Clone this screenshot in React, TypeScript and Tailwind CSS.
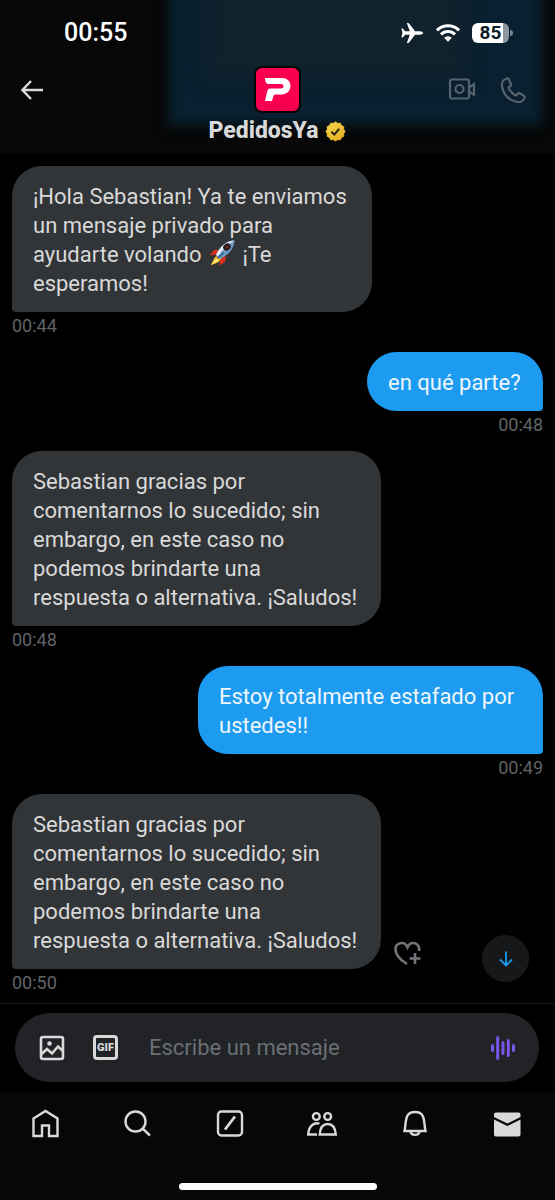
import type { ReactNode } from "react";

type Message = {
  id: number;
  mine: boolean;
  time: string;
  width: string;
  lines: ReactNode[];
};

function Rocket() {
  return (
    <svg viewBox="0 0 26 26" className="mx-[2px] inline-block h-[26px] w-[26px] align-[-4px]" role="img" aria-label="cohete">
      <path d="M11 9.500 5 10 .5 15.500l7-1z" fill="#d9301a" />
      <path d="M17 16l-1 6-5.500 3.500.8-7z" fill="#d9301a" />
      <path d="M6 17 1.500 25.500l8.500-3.500 2-3.500-3-3z" fill="#f6b62c" />
      <path d="M6.500 19 3 24l5.500-2.500 1-2z" fill="#fff08a" />
      <path d="M25.500.5C18 .5 11 6 7 15l4 4c8-4 14-10 14.500-18.500z" fill="#6f9cc6" />
      <path d="M25.500.5C18 .5 11 6 7 15l2.500 2C13 10.500 18 5 25.500.5z" fill="#dbe9f4" />
      <path d="M14.500 12.500 8.500 18" stroke="#2f6aa3" strokeWidth="2" />
      <ellipse cx="18" cy="7" rx="4" ry="3.300" transform="rotate(-40 18 7)" fill="#27181b" />
      <circle cx="18" cy="7" r="1.500" fill="#7a2a24" />
    </svg>
  );
}

const longReply = [
  "Sebastian gracias por",
  "comentarnos lo sucedido; sin",
  "embargo, en este caso no",
  "podemos brindarte una",
  "respuesta o alternativa. ¡Saludos!",
];

const messages: Message[] = [
  {
    id: 1,
    mine: false,
    time: "00:44",
    width: "w-[360px]",
    lines: [
      "¡Hola Sebastian! Ya te enviamos",
      "un mensaje privado para",
      <>
        ayudarte volando <Rocket /> ¡Te
      </>,
      "esperamos!",
    ],
  },
  { id: 2, mine: true, time: "00:48", width: "w-[176px]", lines: ["en qué parte?"] },
  { id: 3, mine: false, time: "00:48", width: "w-[369px]", lines: longReply },
  {
    id: 4,
    mine: true,
    time: "00:49",
    width: "w-[345px]",
    lines: ["Estoy totalmente estafado por", "ustedes!!"],
  },
  { id: 5, mine: false, time: "00:50", width: "w-[369px]", lines: longReply },
];

function StatusBar() {
  return (
    <div className="flex h-[66px] items-center justify-between pr-[42px] pl-16">
      <time className="text-[25px] leading-7 font-medium text-white">00:55</time>
      <div className="flex items-center text-white">
        <svg viewBox="0 0 22 20" className="mr-[13px] h-5 w-[22px]" fill="currentColor" aria-hidden="true">
          <path d="M22 10c0-1-1.400-1.700-3-1.700h-5L8.300.7C8 .2 7.600 0 7 0H5.800l3 8.300H4.200L2.200 6C2 5.700 1.700 5.600 1.400 5.600H.4L1.400 10l-1 4.400h1c.3 0 .6-.1.8-.4l2-2.300h4.600l-3 8.300H7c.6 0 1-.2 1.300-.7l5.700-7.600h5c1.600 0 3-.7 3-1.700z" />
        </svg>
        <svg viewBox="0 0 24 18" className="mr-3 h-[18px] w-6" aria-hidden="true">
          <g fill="none" stroke="currentColor" strokeWidth="3.200">
            <path d="M1 6.300a15.600 15.600 0 0 1 22 0" />
            <path d="M5 10.400a9.900 9.900 0 0 1 14 0" />
          </g>
          <path d="m12 17.800-3.900-4a5.500 5.500 0 0 1 7.800 0z" fill="currentColor" />
        </svg>
        <div className="flex items-center gap-px">
          <div className="flex h-5 w-[37px] items-center justify-center rounded-[6px] bg-linear-to-r from-white from-85% to-[#8d979e] to-85% text-[19px] leading-5 font-bold text-[#0b1c27]">
            85
          </div>
          <span className="h-[6px] w-[3px] rounded-r-full bg-[#7b868d]" />
        </div>
      </div>
    </div>
  );
}

function Header() {
  return (
    <header className="relative h-[154px] overflow-hidden bg-[#070707]">
      <div className="absolute -top-5 right-3 left-[168px] h-[145px] bg-[#08202f] blur-[6px]" />
      <div className="absolute -top-5 right-[88px] left-[205px] h-[100px] bg-[#10222d] blur-[9px]" />
      <div className="relative">
        <StatusBar />
        <div className="grid grid-cols-[1fr_auto_1fr] items-center px-5">
          <button aria-label="Atrás" className="flex text-[#d9d9d9]">
            <svg viewBox="0 0 24 24" className="h-6 w-6" fill="none" stroke="currentColor" strokeWidth="2.500">
              <path d="M11 3 2.500 12 11 21M2.500 12H23" />
            </svg>
          </button>
          <svg viewBox="0 0 47 47" className="h-[47px] w-[47px]" role="img" aria-label="Logo de PedidosYa">
            <rect width="47" height="47" rx="8" fill="#050505" />
            <rect x="2" y="2" width="43" height="43" rx="6" fill="#fa0050" />
            <path
              d="M11 12h17c5 0 8.500 3.200 8.500 8s-3.800 8.500-9 8.500h-6c-1.300 0-1.800.5-2.200 1.700L18 35h-7l2.300-10c.5-1.700 1.500-2.500 3.200-2.500H27c1.500 0 2.500-.8 2.500-2.200s-1-2.200-2.500-2.200H15c-2.500 0-4-2-4-6.100z"
              fill="#fff"
            />
          </svg>
          <div className="flex justify-end gap-6 pr-[9px] text-[#55636d]">
            <button aria-label="Videollamada" className="flex">
              <svg viewBox="0 0 28 24" className="h-6 w-7" fill="none" stroke="currentColor" strokeWidth="2.200">
                <rect x="2" y="2.500" width="19" height="19" rx="2" />
                <circle cx="11.500" cy="12" r="4" />
                <path d="m21 10.500 5-3.500v11l-5-3.500z" />
              </svg>
            </button>
            <button aria-label="Llamar" className="flex">
              <svg viewBox="0 0 26 26" className="h-[26px] w-[26px]" fill="none" stroke="currentColor" strokeWidth="2.200" strokeLinejoin="round">
                <path d="M7 1.500c-3 .7-5.500 3.500-5 7.500C3.200 17.500 9 23.500 17 25c3.800.6 6.800-1.500 7.700-4.500.2-.7 0-1.200-.6-1.600l-4.300-2.700c-.6-.4-1.200-.3-1.700.2l-2 2.100c-3.700-1.600-6-4-7.600-7.800l2-1.700c.6-.5.7-1.100.4-1.800L8.800 2.300c-.4-.7-1-1-1.800-.8z" />
              </svg>
            </button>
          </div>
        </div>
        <div className="mt-1 flex items-center justify-center gap-[7px]">
          <h1 className="text-[23px] leading-7 font-extrabold text-[#d9d9d9]">PedidosYa</h1>
          <svg viewBox="0 0 22 22" className="h-[21px] w-[21px]" role="img" aria-label="Cuenta verificada">
            <defs>
              <linearGradient id="gold" x1="0" y1="0" x2="1" y2="1">
                <stop offset="0" stopColor="#f8d84a" />
                <stop offset="1" stopColor="#e3ab22" />
              </linearGradient>
            </defs>
            <path
              d="m11 1 2.300 1.500L16 2.300l1.200 2.500 2.500 1.200-.2 2.700L21 11l-1.500 2.300.2 2.700-2.500 1.200-1.200 2.500-2.700-.2L11 21l-2.300-1.500-2.700.2-1.200-2.500L2.300 16l.2-2.700L1 11l1.500-2.300L2.300 6l2.500-1.200L6 2.300l2.700.2z"
              fill="url(#gold)"
              stroke="url(#gold)"
              strokeLinejoin="round"
            />
            <path d="m6.800 11.300 2.900 2.900 5.200-6" fill="none" stroke="#23200f" strokeWidth="2" />
          </svg>
        </div>
      </div>
    </header>
  );
}

function Bubble({ message }: { message: Message }) {
  const look = message.mine
    ? "rounded-br-[4px] bg-[#1d9bf0] text-[#eef6fc]"
    : "rounded-bl-[4px] bg-[#323538] text-[#d9d9d9]";

  return (
    <p
      className={`rounded-[30px] px-[21px] pt-4 pb-[14px] text-[22px] leading-[29px] whitespace-nowrap ${message.width} ${look}`}
    >
      {message.lines.map((line, index) => (
        <span key={index} className="block h-[29px]">
          {line}
        </span>
      ))}
    </p>
  );
}

function Conversation() {
  return (
    <main className="relative flex-1">
      <ol className="flex flex-col gap-4 px-3 pt-3 pb-[10px]">
        {messages.map((message, index) => (
          <li key={message.id} className={message.mine ? "flex flex-col items-end" : "flex flex-col items-start"}>
            <div className="flex items-end gap-[13px]">
              <Bubble message={message} />
              {index === messages.length - 1 && (
                <button aria-label="Reaccionar" className="mb-px flex text-[#71767b]">
                  <svg viewBox="0 0 28 28" className="h-7 w-7" fill="none" stroke="currentColor" strokeWidth="2.600">
                    <path d="M13 24C5.500 19.500 1.500 14.500 1.500 9.300 1.500 2.500 10.500.5 13.500 7.200 16.500.5 25.800 2 25.200 11" />
                    <path d="M21 13v11M15.500 18.500h11" />
                  </svg>
                </button>
              )}
            </div>
            <time className="mt-1 text-[18px] leading-5 text-[#5f6468]">{message.time}</time>
          </li>
        ))}
      </ol>
      <button
        aria-label="Ir al último mensaje"
        className="absolute right-[26px] bottom-[21px] flex h-[47px] w-[47px] items-center justify-center rounded-full bg-[#16181a] text-[#1d9bf0]"
      >
        <svg viewBox="0 0 16 16" className="h-4 w-4" fill="none" stroke="currentColor" strokeWidth="1.800">
          <path d="M8 .5v14M2 8.500l6 6 6-6" />
        </svg>
      </button>
    </main>
  );
}

function Composer() {
  return (
    <form className="border-t border-[#1b1c1e] pt-[9px] pr-4 pb-[10px] pl-[15px]">
      <div className="flex h-[69px] items-center rounded-full bg-[#212327] px-6 text-[#d9d9d9]">
        <button type="button" aria-label="Adjuntar imagen" className="mr-7 flex">
          <svg viewBox="0 0 26 26" className="h-[26px] w-[26px]" fill="none" stroke="currentColor" strokeWidth="2.600">
            <rect x="2" y="2" width="22" height="22" rx="2" />
            <circle cx="10.500" cy="8.500" r="2.300" fill="currentColor" stroke="none" />
            <path d="m2 19.500 6-5.500 5 4.500 6-7 5 4.500" />
          </svg>
        </button>
        <button
          type="button"
          className="mr-[31px] flex h-[25px] w-[25px] items-center justify-center rounded-[4px] border-[3px] border-[#d9d9d9] text-[11px] leading-3 font-black"
        >
          GIF
        </button>
        <input
          type="text"
          aria-label="Escribe un mensaje"
          placeholder="Escribe un mensaje"
          className="min-w-0 flex-1 bg-transparent text-[22px] leading-7 outline-none placeholder:text-[#6a6f74]"
        />
        <button type="button" aria-label="Grabar mensaje de voz" className="flex text-[#7856e8]">
          <svg viewBox="0 0 24 26" className="h-[26px] w-6" fill="none" stroke="currentColor" strokeWidth="3" strokeLinecap="round">
            <path d="M1.500 10.500v5M6.700 2.500v21M12 7.500v11M17.300 5.500v15M22.500 10.500v5" />
          </svg>
        </button>
      </div>
    </form>
  );
}

const tabs = [
  {
    label: "Inicio",
    icon: <path d="M3.500 10.500 15.500 3l12 7.500V28H19V17.500h-7V28H3.500z" />,
  },
  {
    label: "Buscar",
    icon: (
      <>
        <circle cx="13.500" cy="13.500" r="10" />
        <path d="m20.500 20.500 7.500 7" />
      </>
    ),
  },
  {
    label: "Grok",
    icon: (
      <>
        <rect x="3" y="3.500" width="24" height="24" rx="3.500" />
        <path d="M10 21.500 20 8.500" strokeWidth="2.800" />
      </>
    ),
  },
  {
    label: "Comunidades",
    icon: (
      <>
        <circle cx="9.300" cy="8.500" r="3.400" />
        <circle cx="20.700" cy="8.500" r="3.400" />
        <path d="M12.500 15.700C6.500 14 1.800 18.500 1.200 26.500h8.800" />
        <path d="M12.700 26.500c.5-6.800 3.300-10.500 8-10.500s7.500 3.700 8.100 10.500z" />
      </>
    ),
  },
  {
    label: "Notificaciones",
    icon: (
      <>
        <path d="M4.500 23c2-8.500-.5-19 10.500-19s8.500 10.500 10.500 19z" />
        <path d="M10.200 23a4.900 4.900 0 0 0 9.600 0" />
      </>
    ),
  },
  {
    label: "Mensajes",
    icon: (
      <g fill="currentColor" stroke="none">
        <path d="M2 9V6.500C2 5.300 2.800 4.500 4 4.500h22.500c1.200 0 2 .8 2 2V9l-13.200 6.500z" />
        <path d="m2 11.500 13.300 6.500 13.200-6.500V26.500c0 1.200-.8 2-2 2H4c-1.200 0-2-.8-2-2z" />
      </g>
    ),
  },
];

function TabBar() {
  return (
    <nav className="flex h-[108px] flex-col items-center justify-between bg-[#070707] pt-4 pb-[10px]">
      <ul className="flex w-full justify-between pr-[33px] pl-[30px]">
        {tabs.map((tab) => (
          <li key={tab.label}>
            <a href="#" aria-label={tab.label} className="flex text-[#d9d9d9]">
              <svg viewBox="0 0 30 30" className="h-[30px] w-[30px] overflow-visible" fill="none" stroke="currentColor" strokeWidth="2.400">
                {tab.icon}
              </svg>
            </a>
          </li>
        ))}
      </ul>
      <div className="h-[7px] w-[198px] rounded-full bg-white" />
    </nav>
  );
}

export default function App() {
  return (
    <div className="flex min-h-screen flex-col bg-black font-['Roboto','Noto_Sans',sans-serif]">
      <Header />
      <Conversation />
      <Composer />
      <TabBar />
    </div>
  );
}
